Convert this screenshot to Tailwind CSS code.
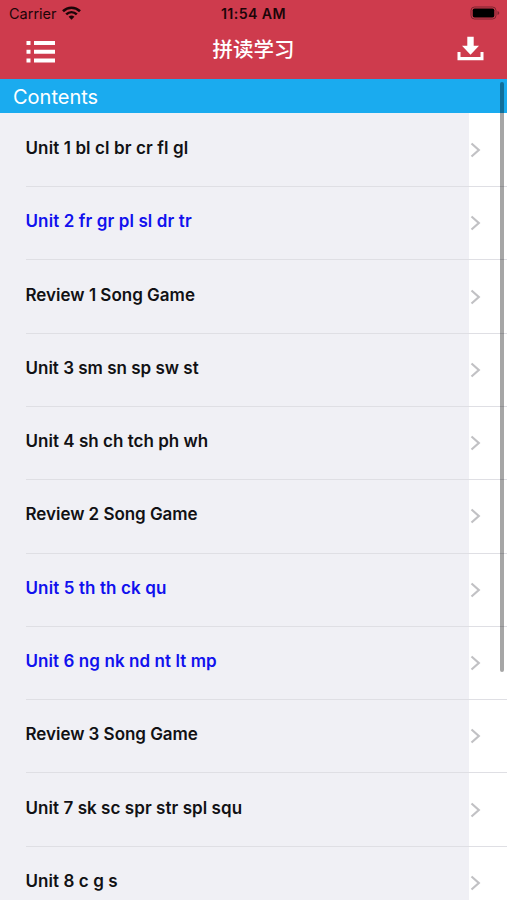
<!DOCTYPE html>
<html lang="zh-CN">
<head>
<meta charset="utf-8">
<title>拼读学习</title>
<script src="https://cdn.jsdelivr.net/npm/@tailwindcss/browser@4"></script>
</head>
<body class="h-[900px] w-[507px] overflow-hidden bg-white font-['Inter','Noto_Sans_CJK_SC',sans-serif]">
<svg class="hidden"><symbol id="chevron" viewBox="0 0 12 18"><path d="M2.500 2.500 9.800 9 2.500 15.500" fill="none" stroke="#c1c1c4" stroke-width="2.200"/></symbol></svg>
<div class="relative flex h-[900px] flex-col overflow-hidden">
  <header class="h-[79px] shrink-0 bg-[#ce3b4d]">
    <div class="grid h-[27px] grid-cols-[1fr_80px_1fr] items-center pr-[7px] pl-[7px] text-[#1c0508]">
      <div class="flex items-center gap-[5px] pl-[2px]">
        <span class="text-[14.500px] leading-[27px]">Carrier</span>
        <svg class="-mt-[2px] h-[14px] w-[19px]" viewBox="0 0 19 14" fill="none" stroke="#1c0508" stroke-width="2.600"><path d="M1 5.200C5.800.500 13.200.500 18 5.200M4.200 8.400C7.300 5.500 11.700 5.500 14.800 8.400"/><path d="M6.600 10.700Q9.500 8.200 12.400 10.700L9.500 13.800Z" fill="#1c0508" stroke="none"/></svg>
      </div>
      <div class="text-center text-[14.200px] leading-[27px] font-semibold tracking-[0.400px] whitespace-nowrap">11:54 AM</div>
      <svg class="-mt-[1px] h-[14px] w-[30px] justify-self-end" viewBox="0 0 30 14"><rect x="1" y="1" width="25" height="12" rx="3.500" fill="none" stroke="#7d2430"/><rect x="2.700" y="2.500" width="21.600" height="9" rx="1.800" fill="#000"/><path d="M27.500 5v4q1.800-.6 1.800-2t-1.800-2" fill="#7d2430"/></svg>
    </div>
    <div class="grid h-[52px] grid-cols-[1fr_auto_1fr] items-start pr-[23px] pl-[23px]">
      <svg class="mt-[13px] ml-[3px] h-[24px] w-[30px]" viewBox="0 0 30 24" fill="#fff"><path d="M.5 1h4v4h-4zM8 1h21v4H8zM.5 9.800h4v4h-4zM8 9.800h21v4H8zM.5 18.500h4v4h-4zM8 18.500h21v4H8z"/></svg>
      <h1 class="mt-[8px] text-[20.500px] leading-[30px] font-medium text-white">拼读学习</h1>
      <svg class="mt-[9px] h-[25px] w-[27px] justify-self-end" viewBox="0 0 27 25" fill="#fff"><path d="M10.300.8h6.400v9h5.300L13.500 18.700 5 9.800h5.300z"/><path d="M.5 16h3v5h20v-5h3v8.300H.5z"/></svg>
    </div>
  </header>
  <h2 class="h-[34px] shrink-0 bg-[#1aabef] pl-[13px] text-[20px] leading-[36px] text-white">Contents</h2>
  <ul class="shrink-0 bg-linear-to-r from-[#f0f0f5] from-[469px] to-white to-[469px] pt-[0.800px] pl-[25.500px] text-[17px] leading-[24px] font-semibold text-[#111114]">
    <li class="flex h-[73.300px] border-b border-[#dfdfe4] pr-[26px]"><span class="mt-[22.200px] flex-1 tracking-[0.110px]">Unit 1 bl cl br cr fl gl</span><svg class="mt-[27.200px] h-[18px] w-[12px]"><use href="#chevron"/></svg></li>
    <li class="flex h-[73.300px] border-b border-[#dfdfe4] pr-[26px] text-[#1111ee]"><span class="mt-[22.200px] flex-1 tracking-[0.110px]">Unit 2 fr gr pl sl dr tr</span><svg class="mt-[27.200px] h-[18px] w-[12px]"><use href="#chevron"/></svg></li>
    <li class="flex h-[73.300px] border-b border-[#dfdfe4] pr-[26px]"><span class="mt-[22.200px] flex-1">Review 1 Song Game</span><svg class="mt-[27.200px] h-[18px] w-[12px]"><use href="#chevron"/></svg></li>
    <li class="flex h-[73.300px] border-b border-[#dfdfe4] pr-[26px]"><span class="mt-[22.200px] flex-1">Unit 3 sm sn sp sw st</span><svg class="mt-[27.200px] h-[18px] w-[12px]"><use href="#chevron"/></svg></li>
    <li class="flex h-[73.300px] border-b border-[#dfdfe4] pr-[26px]"><span class="mt-[22.200px] flex-1 tracking-[0.020px]">Unit 4 sh ch tch ph wh</span><svg class="mt-[27.200px] h-[18px] w-[12px]"><use href="#chevron"/></svg></li>
    <li class="flex h-[73.300px] border-b border-[#dfdfe4] pr-[26px]"><span class="mt-[22.200px] flex-1 tracking-[-0.040px]">Review 2 Song Game</span><svg class="mt-[27.200px] h-[18px] w-[12px]"><use href="#chevron"/></svg></li>
    <li class="flex h-[73.300px] border-b border-[#dfdfe4] pr-[26px] text-[#1111ee]"><span class="mt-[22.200px] flex-1 tracking-[0.110px]">Unit 5 th th ck qu</span><svg class="mt-[27.200px] h-[18px] w-[12px]"><use href="#chevron"/></svg></li>
    <li class="flex h-[73.300px] border-b border-[#dfdfe4] pr-[26px] text-[#1111ee]"><span class="mt-[22.200px] flex-1 tracking-[0.080px]">Unit 6 ng nk nd nt lt mp</span><svg class="mt-[27.200px] h-[18px] w-[12px]"><use href="#chevron"/></svg></li>
    <li class="flex h-[73.300px] border-b border-[#dfdfe4] pr-[26px]"><span class="mt-[22.200px] flex-1 tracking-[-0.040px]">Review 3 Song Game</span><svg class="mt-[27.200px] h-[18px] w-[12px]"><use href="#chevron"/></svg></li>
    <li class="flex h-[73.300px] border-b border-[#dfdfe4] pr-[26px]"><span class="mt-[22.200px] flex-1 tracking-[0.060px]">Unit 7 sk sc spr str spl squ</span><svg class="mt-[27.200px] h-[18px] w-[12px]"><use href="#chevron"/></svg></li>
    <li class="flex h-[73.300px] border-b border-[#dfdfe4] pr-[26px]"><span class="mt-[22.200px] flex-1 tracking-[0.080px]">Unit 8 c g s</span><svg class="mt-[27.200px] h-[18px] w-[12px]"><use href="#chevron"/></svg></li>
  </ul>
  <div class="absolute top-[82px] right-[3px] h-[590px] w-[4px] rounded-full bg-black/35"></div>
</div>
</body>
</html>
